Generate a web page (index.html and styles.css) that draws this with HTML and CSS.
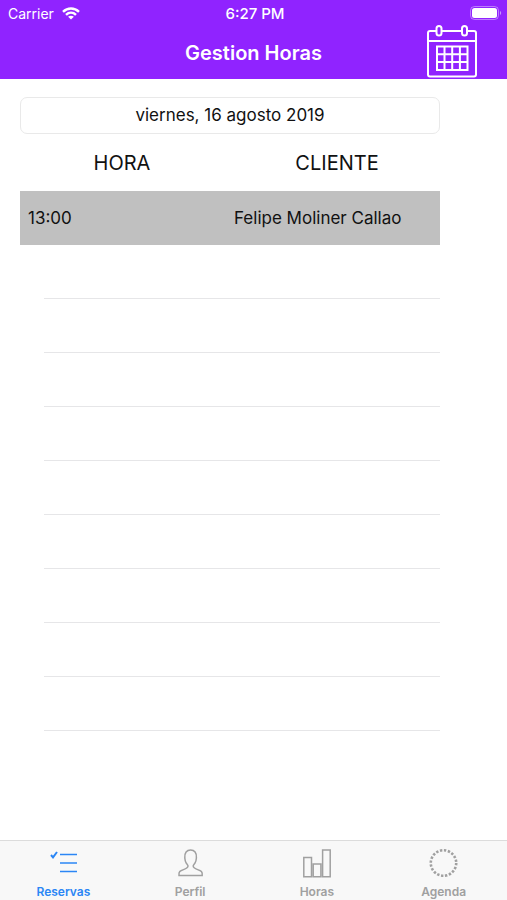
FILE: index.html
```html
<!DOCTYPE html>
<html lang="es">
<head>
  <meta charset="UTF-8" />
  <meta name="viewport" content="width=device-width, initial-scale=1" />
  <title>Gestion Horas</title>
  <link rel="stylesheet" href="styles.css">
</head>
<body>
  <header class="header">
    <div class="status">
      <div class="carrier">
        <span>Carrier</span>
        <svg width="18" height="13" viewBox="0 0 18 13" fill="none" stroke="#fff" stroke-width="2.4">
          <path d="M1 4.800C5.600 .3 12.400 .3 17 4.800" />
          <path d="M4 7.900c2.900-2.800 7.100-2.800 10 0" />
          <path d="M9 12.600 6.100 9.800c1.700-1.500 4.100-1.500 5.800 0z" fill="#fff" stroke="none" />
        </svg>
      </div>
      <span class="time">6:27 PM</span>
      <svg class="battery" width="32" height="14" viewBox="0 0 32 14">
        <rect x=".5" y=".5" width="28" height="13" rx="4" fill="none" stroke="#fff" stroke-opacity=".4" />
        <rect x="2" y="2" width="25" height="10" rx="2.5" fill="#fff" />
        <path d="M30 5v4c1.600-.7 1.600-3.300 0-4z" fill="#fff" fill-opacity=".5" />
      </svg>
    </div>
    <div class="navbar">
      <h1>Gestion Horas</h1>
      <button class="calendar" type="button" aria-label="Calendario">
        <svg width="50" height="53" viewBox="0 0 50 53" fill="none" stroke="#fff" stroke-width="2">
          <path d="M9 5H3a2 2 0 0 0-2 2v41.500a2 2 0 0 0 2 2h44a2 2 0 0 0 2-2V7a2 2 0 0 0-2-2h-6M15 5h20M1 15h48" />
          <rect x="9.500" y="0" width="5" height="9.500" rx="2.500" />
          <rect x="35" y="0" width="5" height="9.500" rx="2.500" />
          <path d="M10 20.500h30.500V44H10zM17.500 20.500V44M25.200 20.500V44M32.900 20.500V44M10 28.300h30.500M10 36.100h30.500" />
        </svg>
      </button>
    </div>
  </header>

  <main class="content">
    <input class="date" type="text" aria-label="Fecha" value="viernes, 16 agosto 2019" />

    <table class="hours">
      <thead>
        <tr><th>HORA</th><th>CLIENTE</th></tr>
      </thead>
      <tbody>
        <tr class="selected"><td>13:00</td><td>Felipe Moliner Callao</td></tr>
        <tr><td></td><td></td></tr>
        <tr><td></td><td></td></tr>
        <tr><td></td><td></td></tr>
        <tr><td></td><td></td></tr>
        <tr><td></td><td></td></tr>
        <tr><td></td><td></td></tr>
        <tr><td></td><td></td></tr>
        <tr><td></td><td></td></tr>
        <tr><td></td><td></td></tr>
      </tbody>
    </table>
  </main>

  <nav class="tabs">
    <a class="tab active" href="#reservas">
      <svg width="28" height="30" viewBox="0 0 28 30" fill="none" stroke="currentColor" stroke-width="1.5">
        <path d="M2 6l2 2.300L8 3" stroke-width="2" />
        <path d="M11 5.500h17M11 14h17M11 22.500h17" />
      </svg>
      <span>Reservas</span>
    </a>
    <a class="tab" href="#perfil">
      <svg width="28" height="30" viewBox="0 0 28 30" fill="none" stroke="currentColor" stroke-width="1.5">
        <path d="M3 26.500c-.4-3.800 1-4.700 4.500-5.900 3.300-1.200 4.500-1.700 4.500-3.600 0-1.300-1-1.700-1.700-2.800C9.400 12.900 9 11.600 8.800 9 8.300 3.600 10.800 1 14.600 1s6.300 2.600 5.800 8c-.2 2.600-.6 3.900-1.500 5.200-.7 1.100-1.700 1.500-1.700 2.800 0 1.900 1.200 2.400 4.500 3.600 3.500 1.200 4.900 2.100 4.500 5.900z" />
      </svg>
      <span>Perfil</span>
    </a>
    <a class="tab" href="#horas">
      <svg width="28" height="30" viewBox="0 0 28 30" fill="none" stroke="currentColor" stroke-width="1.5">
        <path d="M.8 8.500h7.700v19.200H.8zM10.200 15.100h7.700v12.600h-7.700zM19.600 1h7.600v26.700h-7.600z" />
      </svg>
      <span>Horas</span>
    </a>
    <a class="tab" href="#agenda">
      <svg width="28" height="30" viewBox="0 0 28 30" fill="none" stroke="currentColor" stroke-width="2.6">
        <circle cx="13.500" cy="14" r="12.730" stroke-dasharray="2.400 1.600" />
      </svg>
      <span>Agenda</span>
    </a>
  </nav>
</body>
</html>
```
FILE: styles.css
```css
* {
  box-sizing: border-box;
}

body {
  display: flex;
  flex-direction: column;
  min-height: 100vh;
  margin: 0;
  background-color: #ffffff;
  color: #111111;
  font-family: Inter, "Liberation Sans", sans-serif;
  font-size: 17px;
}

.header {
  height: 79px;
  background-color: #9023ff;
  color: #ffffff;
}

.status {
  display: grid;
  grid-template-columns: 1fr auto 1fr;
  align-items: center;
  height: 26px;
  padding: 0 5px 0 8px;
  font-size: 14px;
}

.carrier {
  display: flex;
  align-items: center;
  gap: 8px;
}

.time {
  font-size: 15px;
  font-weight: 500;
}

.battery {
  justify-self: end;
}

.navbar {
  display: grid;
  grid-template-columns: 1fr auto 1fr;
  align-items: center;
  height: 53px;
  padding: 0 30px;
}

h1 {
  grid-column: 2;
  margin: 0;
  font-size: 20px;
  font-weight: 600;
}

.calendar {
  justify-self: end;
  height: 53px;
  padding: 0;
  border: none;
  background: none;
  color: inherit;
  cursor: pointer;
}

.calendar svg,
.tab svg {
  display: block;
  overflow: visible;
}

.content {
  flex: 1;
  padding: 18px 67px 20px 20px;
}

.date {
  display: block;
  width: 100%;
  height: 37px;
  padding: 0 8px 2px;
  border: 1px solid #e9e9e9;
  border-radius: 7px;
  color: inherit;
  font: inherit;
  text-align: center;
}

.hours {
  width: 100%;
  border-collapse: collapse;
  table-layout: fixed;
}

.hours th {
  height: 57px;
  padding: 0;
  font-size: 20px;
  font-weight: 400;
}

.hours th:first-child {
  width: 204px;
}

.hours th:last-child {
  padding-left: 10px;
}

.hours td {
  height: 54px;
  padding: 0 8px;
}

.hours td:last-child {
  padding-left: 10px;
}

/* row separators, inset on the left */
.hours tbody tr {
  background: linear-gradient(#e6e6e8, #e6e6e8) right bottom / calc(100% - 24px) 1px no-repeat;
}

.hours tbody .selected {
  background: #c0c0c0;
}

.tabs {
  display: flex;
  height: 60px;
  border-top: 1px solid #dcdcdc;
  background-color: #f8f8f8;
}

.tab {
  display: flex;
  flex: 1;
  flex-direction: column;
  align-items: center;
  padding-top: 8px;
  color: #a0a0a0;
  font-size: 12px;
  font-weight: 600;
  text-decoration: none;
}

.tab span {
  margin-top: 5px;
  line-height: 16px;
}

.tab.active {
  color: #2b86f5;
}
```
